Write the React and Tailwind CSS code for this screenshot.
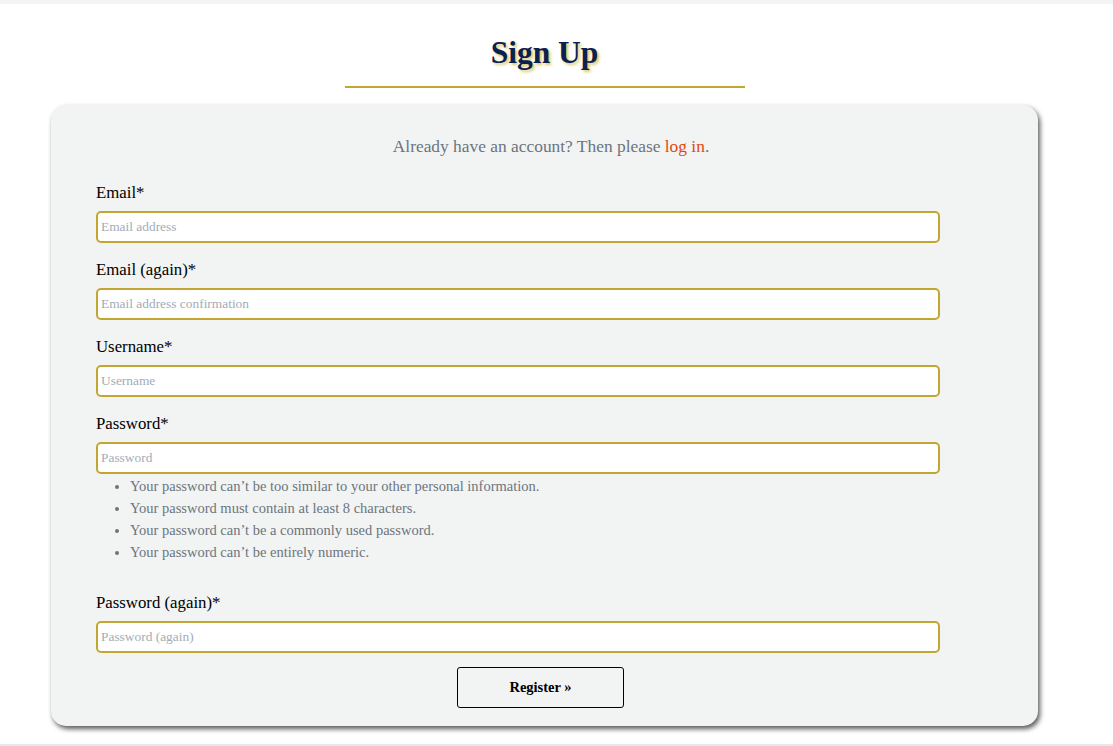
import React from "react";

const serif = { fontFamily: '"Liberation Serif", "Times New Roman", serif' };

function Field({ label, placeholder, type = "text" }) {
  return (
    <div>
      <label className="block h-[24px] leading-[24px] text-[16.8px] text-black mb-[6px]">{label}</label>
      <input
        type={type}
        placeholder={placeholder}
        className="block w-[844px] h-[32px] bg-white border-2 border-[#c3a632] rounded-[5px] px-[3px] text-[13.4px] placeholder:text-[#a3acb6] outline-none"
        style={serif}
      />
    </div>
  );
}

export default function App() {
  return (
    <div className="min-h-[746px] bg-white" style={serif}>
      <div className="h-[4px] bg-[#f4f4f4]" />
      <div className="w-[1089px] flex flex-col items-center">
        <h1
          className="mt-[30px] h-[38px] leading-[38px] text-[31.5px] font-bold text-[#0c2150]"
          style={{ textShadow: "2px 2px 3px #d9c766" }}
        >
          Sign Up
        </h1>
        <div className="mt-[14px] w-[400px] h-[2px] bg-[#c3a632]" />
        <div className="mt-[17px] w-[987px] h-[621px] bg-[#f2f3f3] rounded-[15px] shadow-[2px_3px_5px_rgba(0,0,0,0.65)] pt-[29px] pl-[45px]">
          <p className="h-[24px] leading-[24px] text-[17.4px] text-[#6c757d] text-center pl-[13px] pr-[45px]">
            Already have an account? Then please <span className="text-[#e2470f]">log in</span>.
          </p>
          <div className="mt-[23px] flex flex-col gap-[15px]">
            <Field label="Email*" placeholder="Email address" />
            <Field label="Email (again)*" placeholder="Email address confirmation" />
            <Field label="Username*" placeholder="Username" />
            <div>
              <Field label="Password*" placeholder="Password" type="password" />
              <ul className="mt-[1px] pl-[34px] list-disc text-[14.5px] leading-[22px] text-[#6c757d] marker:text-[#6c757d]">
                <li>Your password can’t be too similar to your other personal information.</li>
                <li>Your password must contain at least 8 characters.</li>
                <li>Your password can’t be a commonly used password.</li>
                <li>Your password can’t be entirely numeric.</li>
              </ul>
            </div>
          </div>
          <div className="mt-[28px]">
            <Field label="Password (again)*" placeholder="Password (again)" type="password" />
          </div>
          <button
            className="mt-[14px] ml-[361px] block w-[167px] h-[41px] border border-black rounded-[3px] bg-transparent text-[14.5px] font-bold text-black"
            style={serif}
          >
            Register »
          </button>
        </div>
      </div>
      <div className="mt-[18px] h-[2px] bg-[#e8e8e8]" />
    </div>
  );
}
